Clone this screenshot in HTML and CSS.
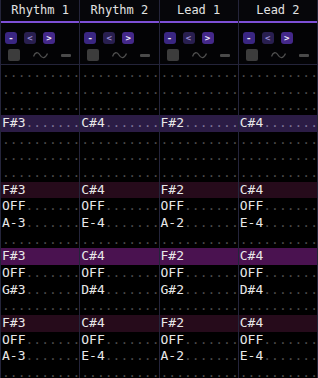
FILE: index.html
```html
<!DOCTYPE html>
<html lang="en">
<head>
  <meta charset="UTF-8" />
  <meta name="viewport" content="width=device-width, initial-scale=1.0" />
  <title>Pattern Editor</title>
  <link rel="stylesheet" href="styles.css">
</head>
<body>
  <div class="tracks" id="tracks">
    <!-- JS fills the four tracks -->
  </div>

  <script>
  const ROWS = 19;
  const CELL = 10;

  const tracks = [
    { name: 'Rhythm 1', notes: { 3: 'F#3', 7: 'F#3', 8: 'OFF', 9: 'A-3', 11: 'F#3', 12: 'OFF', 13: 'G#3', 15: 'F#3', 16: 'OFF', 17: 'A-3' } },
    { name: 'Rhythm 2', notes: { 3: 'C#4', 7: 'C#4', 8: 'OFF', 9: 'E-4', 11: 'C#4', 12: 'OFF', 13: 'D#4', 15: 'C#4', 16: 'OFF', 17: 'E-4' } },
    { name: 'Lead 1', notes: { 3: 'F#2', 7: 'F#2', 8: 'OFF', 9: 'A-2', 11: 'F#2', 12: 'OFF', 13: 'G#2', 15: 'F#2', 16: 'OFF', 17: 'A-2' } },
    { name: 'Lead 2', notes: { 3: 'C#4', 7: 'C#4', 8: 'OFF', 9: 'E-4', 11: 'C#4', 12: 'OFF', 13: 'D#4', 15: 'C#4', 16: 'OFF', 17: 'E-4' } }
  ];

  function rowClass(i) {
    if (i === 3) return 'row cursor';
    if (i === 11) return 'row playing';
    if (i % 4 === 3) return 'row beat';
    return 'row';
  }

  function renderTracks() {
    const container = document.getElementById('tracks');
    container.innerHTML = '';
    tracks.forEach(track => {
      let rows = '';
      for (let i = 0; i < ROWS; i++) {
        const note = track.notes[i] || '';
        rows += `<div class="${rowClass(i)}"><span class="note">${note}</span><span class="dots">${'.'.repeat(CELL - note.length)}</span></div>`;
      }
      const col = document.createElement('div');
      col.className = 'track';
      col.innerHTML = `
        <div class="track-name">${track.name}</div>
        <div class="track-ctrl">
          <div class="btn-row">
            <button class="btn minus">-</button>
            <button class="btn prev">&lt;</button>
            <button class="btn next">&gt;</button>
          </div>
          <div class="wave-row">
            <span class="swatch"></span>
            <svg class="wave" width="15" height="8" viewBox="0 0 15 8"><path d="M0.5 5.5 C2 1, 5 0.5, 7 4 S12 8, 14.5 2.5" /></svg>
            <span class="dash"></span>
          </div>
        </div>
        <div class="rows">${rows}</div>
      `;
      container.appendChild(col);
    });
  }

  renderTracks();
  </script>
</body>
</html>
```

FILE: styles.css
```css
body { margin: 0; background: #000; color: #e6e6e6; font-family: "DejaVu Sans Mono", monospace; overflow: hidden; }
.tracks { display: flex; height: 378px; border-left: 1px solid #24243a; }
.track { flex: 1; min-width: 0; border-right: 1px solid #24243a; }

.track-name { height: 21px; line-height: 21px; text-align: center; font-size: 12px; color: #e2e2e2; background: #06060a; border-bottom: 2px solid #7d4fd6; }

.track-ctrl { height: 42px; box-sizing: border-box; padding: 9px 0 0 4px; background: #030305; border-bottom: 1px solid #24243a; }
.btn-row { display: flex; gap: 7px; height: 12px; }
.btn { width: 12px; height: 12px; padding: 0; border: 0; border-radius: 3px; font-family: "DejaVu Sans Mono", monospace; font-size: 9px; font-weight: bold; line-height: 12px; color: #f0eefa; cursor: pointer; }
.minus { background: #3a2682; }
.prev { background: #291f50; color: #9a8cd0; }
.next { background: #44288a; }

.wave-row { display: flex; align-items: center; height: 12px; margin-top: 5px; padding-left: 3px; }
.swatch { width: 12px; height: 12px; border-radius: 2px; background: #3c3c3c; }
.wave { margin-left: 13px; fill: none; stroke: #4e4e4e; stroke-width: 1.3; }
.dash { width: 10px; height: 3px; margin-left: 13px; border-radius: 1px; background: #4a4a4a; }

.row { display: flex; height: 16.67px; line-height: 16.67px; padding-left: 1px; font-size: 13px; white-space: nowrap; overflow: hidden; }
.note { color: #e8e8e8; }
.dots { color: #4a4a4a; }
.cursor { background: #2b1c45; }
.cursor .dots { color: #7a7094; }
.beat { background: #260b1b; }
.playing { background: #4a1250; }
.beat .dots, .playing .dots { color: transparent; }
```
